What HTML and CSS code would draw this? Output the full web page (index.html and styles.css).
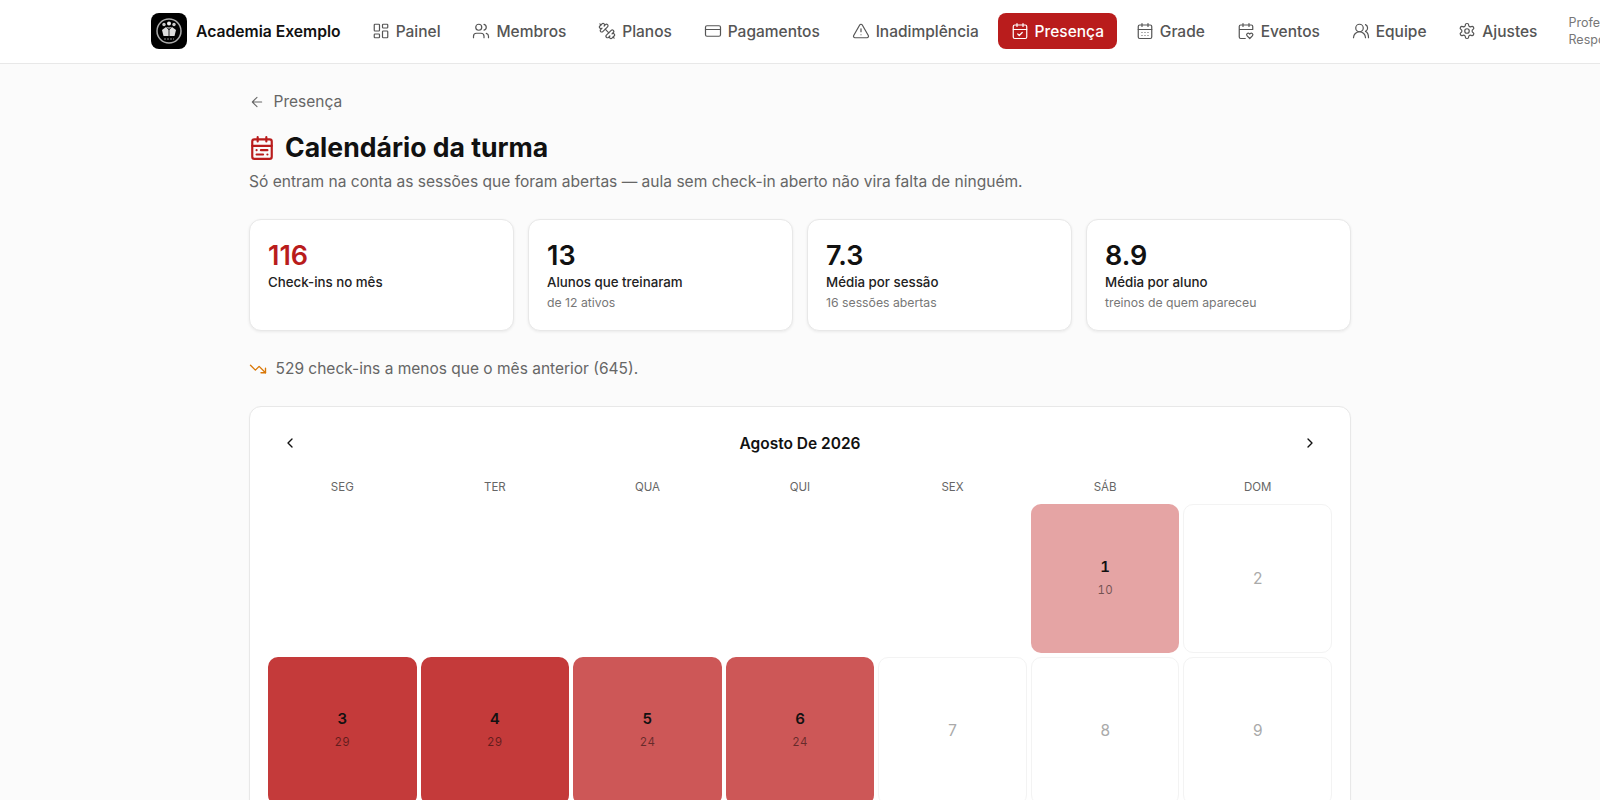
FILE: index.html
```html
<!DOCTYPE html>
<html lang="pt-BR">
<head>
<meta charset="utf-8">
<title>Calendário da turma</title>
<link rel="stylesheet" href="styles.css">
</head>
<body>
<svg class="sprite" width="0" height="0" aria-hidden="true">
  <symbol id="cal" viewBox="0 0 24 24"><path d="M8 2v4M16 2v4"/><rect x="3" y="4" width="18" height="18" rx="2"/><path d="M3 10h18"/></symbol>
</svg>
<header class="topbar">
  <div class="brand">
    <span class="logo">
      <svg viewBox="0 0 36 36" width="36" height="36"><circle cx="18" cy="18" r="12" fill="none" stroke="#aaa" stroke-width="1.500"/><circle cx="13" cy="11.500" r="1.700" fill="#ccc"/><circle cx="18" cy="10.500" r="2" fill="#eee"/><circle cx="23" cy="11.500" r="1.700" fill="#ccc"/><path d="M11 17l4-3h6l4 3-1.500 6h-11z" fill="#ddd"/><path d="M18 14v9M15.500 14l2.500 3 2.500-3" fill="none" stroke="#222" stroke-width="1"/><path d="M13 26h10" stroke="#888" stroke-width="1.200" stroke-dasharray="2 1"/></svg>
    </span>
    <span class="brand-name">Academia Exemplo</span>
  </div>
  <nav class="nav">
    <a class="nav-item"><svg class="ico" viewBox="0 0 24 24"><rect x="3" y="3" width="7" height="9" rx="1"/><rect x="14" y="3" width="7" height="5" rx="1"/><rect x="14" y="12" width="7" height="9" rx="1"/><rect x="3" y="16" width="7" height="5" rx="1"/></svg>Painel</a>
    <a class="nav-item"><svg class="ico" viewBox="0 0 24 24"><path d="M16 21v-2a4 4 0 0 0-4-4H6a4 4 0 0 0-4 4v2"/><circle cx="9" cy="7" r="4"/><path d="M22 21v-2a4 4 0 0 0-3-3.870M16 3.130a4 4 0 0 1 0 7.750"/></svg>Membros</a>
    <a class="nav-item"><svg class="ico" viewBox="0 0 24 24"><g transform="matrix(-1 0 0 1 24 0)"><path d="M17.596 12.768a2 2 0 1 0 2.829-2.829l-1.768-1.767a2 2 0 0 0 2.828-2.829l-2.828-2.828a2 2 0 0 0-2.829 2.828l-1.767-1.768a2 2 0 1 0-2.829 2.829z"/><path d="M2.500 21.500l1.400-1.400M20.100 3.900l1.400-1.400"/><path d="M5.343 21.485a2 2 0 1 0 2.829-2.828l1.767 1.768a2 2 0 1 0 2.829-2.829l-6.364-6.364a2 2 0 1 0-2.829 2.829l1.768 1.767a2 2 0 0 0-2.828 2.829z"/><path d="M9.600 14.400l4.800-4.800"/></g></svg>Planos</a>
    <a class="nav-item"><svg class="ico" viewBox="0 0 24 24"><rect x="2" y="5" width="20" height="14" rx="2"/><path d="M2 10h20"/></svg>Pagamentos</a>
    <a class="nav-item"><svg class="ico" viewBox="0 0 24 24"><path d="M21.730 18l-8-14a2 2 0 0 0-3.480 0l-8 14A2 2 0 0 0 4 21h16a2 2 0 0 0 1.730-3"/><path d="M12 9v4M12 17h.01"/></svg>Inadimplência</a>
    <a class="nav-item active"><svg class="ico" viewBox="0 0 24 24"><use href="#cal"/><path d="M9 16l2 2 4-4"/></svg>Presença</a>
    <a class="nav-item"><svg class="ico" viewBox="0 0 24 24"><use href="#cal"/><path d="M8 14h.01M12 14h.01M16 14h.01M8 18h.01M12 18h.01M16 18h.01"/></svg>Grade</a>
    <a class="nav-item"><svg class="ico" viewBox="0 0 24 24"><path d="M8 2v4M16 2v4M21 10V6a2 2 0 0 0-2-2H5a2 2 0 0 0-2 2v14a2 2 0 0 0 2 2h6M3 10h18"/><path d="M17 22l-3.500-3.500a2.100 2.100 0 0 1 3-3l.5.5.5-.5a2.100 2.100 0 0 1 3 3z"/></svg>Eventos</a>
    <a class="nav-item"><svg class="ico" viewBox="0 0 24 24"><circle cx="10" cy="8" r="5"/><path d="M2 21a8 8 0 0 1 16 0M18 3.500a5 5 0 0 1 0 9c2.500 1 4 4 4 8.500"/></svg>Equipe</a>
    <a class="nav-item"><svg class="ico" viewBox="0 0 24 24"><path d="M12.220 2h-.44a2 2 0 0 0-2 2v.18a2 2 0 0 1-1 1.730l-.43.25a2 2 0 0 1-2 0l-.15-.08a2 2 0 0 0-2.730.73l-.22.38a2 2 0 0 0 .73 2.730l.15.1a2 2 0 0 1 1 1.720v.51a2 2 0 0 1-1 1.740l-.15.09a2 2 0 0 0-.73 2.730l.22.38a2 2 0 0 0 2.730.73l.15-.08a2 2 0 0 1 2 0l.43.25a2 2 0 0 1 1 1.730V20a2 2 0 0 0 2 2h.44a2 2 0 0 0 2-2v-.18a2 2 0 0 1 1-1.730l.43-.25a2 2 0 0 1 2 0l.15.08a2 2 0 0 0 2.730-.73l.22-.39a2 2 0 0 0-.73-2.730l-.15-.08a2 2 0 0 1-1-1.740v-.5a2 2 0 0 1 1-1.740l.15-.09a2 2 0 0 0 .73-2.730l-.22-.38a2 2 0 0 0-2.730-.73l-.15.08a2 2 0 0 1-2 0l-.43-.25a2 2 0 0 1-1-1.730V4a2 2 0 0 0-2-2z"/><circle cx="12" cy="12" r="3"/></svg>Ajustes</a>
  </nav>
  <div class="user"><span>Professor</span><span>Responsável</span></div>
</header>
<main class="page">
  <a class="back"><svg class="ico back-ico" viewBox="0 0 24 24"><path d="M19 12H5M12 19l-7-7 7-7"/></svg>Presença</a>
  <div class="title-row">
    <svg class="ico title-ico" viewBox="0 0 24 24"><use href="#cal"/><path d="M17 14h-6M13 18H7M7 14h.01M17 18h.01"/></svg>
    <h1>Calendário da turma</h1>
  </div>
  <p class="lede">Só entram na conta as sessões que foram abertas — aula sem check-in aberto não vira falta de ninguém.</p>
  <section class="stats">
    <div class="stat"><div class="stat-value red">116</div><div class="stat-label">Check-ins no mês</div></div>
    <div class="stat"><div class="stat-value">13</div><div class="stat-label">Alunos que treinaram</div><div class="stat-note">de 12 ativos</div></div>
    <div class="stat"><div class="stat-value">7.3</div><div class="stat-label">Média por sessão</div><div class="stat-note">16 sessões abertas</div></div>
    <div class="stat"><div class="stat-value">8.9</div><div class="stat-label">Média por aluno</div><div class="stat-note">treinos de quem apareceu</div></div>
  </section>
  <p class="trend"><svg class="ico trend-ico" viewBox="0 0 24 24"><path d="M22 17l-8.500-8.500-5 5L2 7"/><path d="M16 17h6v-6"/></svg>529 check-ins a menos que o mês anterior (645).</p>
  <section class="calendar">
    <div class="cal-head">
      <svg class="ico chev" viewBox="0 0 24 24"><path d="M15 18l-6-6 6-6"/></svg>
      <div class="cal-month">Agosto De 2026</div>
      <svg class="ico chev" viewBox="0 0 24 24"><path d="M9 18l6-6-6-6"/></svg>
    </div>
    <div class="grid weekdays"><div>SEG</div><div>TER</div><div>QUA</div><div>QUI</div><div>SEX</div><div>SÁB</div><div>DOM</div></div>
    <div class="grid days">
      <div class="blank"></div><div class="blank"></div><div class="blank"></div><div class="blank"></div><div class="blank"></div>
      <div class="day lvl-low"><b>1</b><small>10</small></div>
      <div class="day empty">2</div>
      <div class="day lvl-high"><b>3</b><small>29</small></div>
      <div class="day lvl-high"><b>4</b><small>29</small></div>
      <div class="day lvl-mid"><b>5</b><small>24</small></div>
      <div class="day lvl-mid"><b>6</b><small>24</small></div>
      <div class="day empty">7</div>
      <div class="day empty">8</div>
      <div class="day empty">9</div>
    </div>
  </section>
</main>
</body>
</html>
```
FILE: styles.css
```css
* { box-sizing: border-box; }
html, body { margin: 0; overflow: hidden; height: 800px; }
body { background: #fbfbfb; color: #111; font-family: Inter, "Liberation Sans", sans-serif; }
.sprite { position: absolute; }
.ico { width: 18px; height: 18px; fill: none; stroke: currentColor; stroke-width: 2; stroke-linecap: round; stroke-linejoin: round; flex: none; }
.topbar { height: 64px; background: #fff; border-bottom: 1px solid #e8e8e8; display: flex; align-items: center; padding: 0 0 1px 151px; white-space: nowrap; overflow: hidden; }
.brand { display: flex; align-items: center; gap: 9px; margin-right: 18px; }
.logo { width: 36px; height: 36px; background: #000; border-radius: 8px; display: block; }
.logo svg { display: block; }
.brand-name { font-size: 15.700px; font-weight: 600; }
.nav { display: flex; gap: 5.800px; }
.nav-item { display: flex; align-items: center; gap: 6px; height: 36px; padding: 0 13px; border-radius: 8px; font-size: 15.500px; font-weight: 500; color: #555; }
.nav-item .ico { stroke-width: 1.600; }
.nav-item.active { background: #b91c1c; color: #fff; }
.user { display: flex; flex-direction: column; margin-left: 18px; font-size: 12.500px; line-height: 17px; color: #777; }
.page { width: 1102px; margin: 0 auto; padding-top: 30px; }
.back { display: flex; align-items: center; gap: 8.500px; font-size: 15.500px; line-height: 16px; color: #666; }
.back-ico { width: 16px; height: 16px; stroke-width: 1.600; }
.title-row { display: flex; align-items: center; gap: 10px; margin-top: 18px; }
.title-ico { width: 26px; height: 26px; margin-top: 2px; color: #b91c1c; }
h1 { margin: 0; font-size: 26.600px; line-height: 38px; font-weight: 700; color: #111; }
.lede { margin: 5px 0 0; font-size: 15.550px; line-height: 22px; color: #666; }
.stats { display: grid; grid-template-columns: repeat(4, 1fr); gap: 14px; margin-top: 26px; }
.stat { height: 112px; background: #fff; border: 1px solid #e8e8e8; border-radius: 12px; box-shadow: 0 1px 3px rgba(0,0,0,.07); padding: 19px 18px 0; }
.stat-value { font-size: 27px; line-height: 34px; font-weight: 600; color: #111; }
.stat-value.red { color: #b91c1c; }
.stat-label { font-size: 13.300px; line-height: 18px; font-weight: 500; color: #222; }
.stat-note { font-size: 12.250px; line-height: 16px; color: #777; margin-top: 4px; }
.trend { display: flex; align-items: center; gap: 8.500px; margin: 27px 0 0; font-size: 15.500px; line-height: 22px; color: #666; }
.trend-ico { width: 18px; height: 18px; color: #d97706; stroke-width: 1.800; }
.calendar { margin-top: 26px; background: #fff; border: 1px solid #e8e8e8; border-radius: 12px; padding: 18px 18px 20px; box-shadow: 0 1px 2px rgba(0,0,0,.04); }
.cal-head { display: flex; align-items: center; justify-content: space-between; padding: 0 14px; height: 36px; }
.cal-month { font-size: 15.500px; font-weight: 600; color: #111; }
.chev { width: 16px; height: 16px; color: #111; }
.grid { display: grid; grid-template-columns: repeat(7, 1fr); gap: 4px; }
.weekdays { margin-top: 18px; font-size: 11.500px; line-height: 16px; font-weight: 400; color: #666; text-align: center; }
.days { margin-top: 9px; }
.day { aspect-ratio: 1; border-radius: 10px; display: flex; flex-direction: column; align-items: center; justify-content: center; font-variant-numeric: tabular-nums; }
.day b { font-size: 15px; line-height: 20px; font-weight: 600; color: #111; }
.day small { font-size: 11.500px; line-height: 20px; margin-top: 3px; letter-spacing: .3px; color: rgba(0,0,0,.5); }
.empty { background: #fff; border: 1px solid #f3f3f3; color: #aaa; font-size: 15.500px; }
.lvl-low { background: #e5a4a4; }
.lvl-mid { background: #cd5757; }
.lvl-high { background: #c43a3a; }
```
